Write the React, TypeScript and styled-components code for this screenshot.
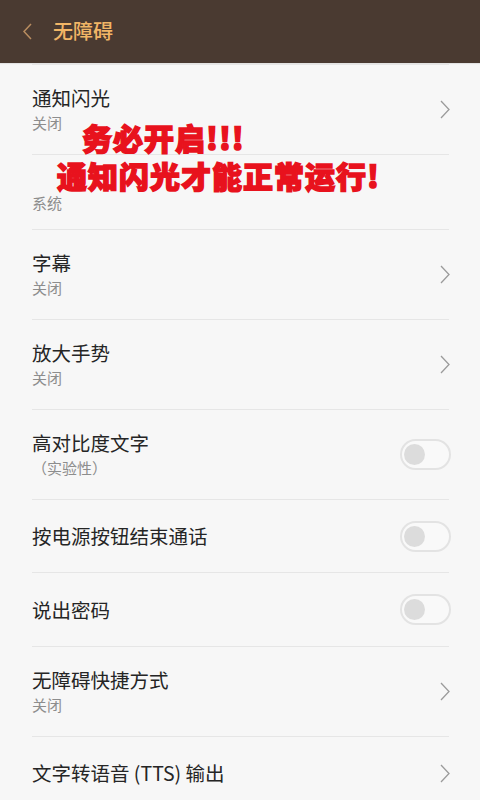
import React from "react";
import styled, { createGlobalStyle } from "styled-components";

const Global = createGlobalStyle`
  html, body { margin: 0; padding: 0; background: #f7f7f7; }
  body {
    font-family: "Noto Sans CJK SC", "Noto Sans", sans-serif;
    overflow: hidden;
  }
  * { box-sizing: border-box; }
`;

const Screen = styled.div`
  width: 480px;
  height: 800px;
  background: #f7f7f7;
  display: flex;
  flex-direction: column;
  overflow: hidden;
  position: relative;
`;

const Header = styled.header`
  height: 63px;
  flex: none;
  background: #4a3a31;
  display: flex;
  align-items: center;
  padding-left: 23px;
  gap: 21px;
  box-shadow: 0 1px 1px rgba(0, 0, 0, 0.08);
`;

const BackIcon = styled.svg`
  width: 9px;
  height: 17px;
  margin-top: -1px;
`;

const HeaderTitle = styled.h1`
  margin: 0;
  font-size: 20px;
  font-weight: 500;
  color: #f1b566;
  line-height: 1;
  margin-top: -2px;
`;

const List = styled.div`
  margin: 1px 31px 0 32px;
  border-top: 1px solid #e6e6e6;
  display: flex;
  flex-direction: column;
`;

const Row = styled.div<{ $h: number }>`
  height: ${(p) => p.$h}px;
  flex: none;
  display: flex;
  align-items: center;
  justify-content: space-between;
  border-bottom: 1px solid #e6e6e6;
`;

const TextBlock = styled.div`
  display: flex;
  flex-direction: column;
`;

const Title = styled.div<{ $blank?: boolean }>`
  font-size: 19.5px;
  line-height: 26px;
  height: ${(p) => (p.$blank ? 20 : 26)}px;
  color: #252525;
  white-space: nowrap;
`;

const Sub = styled.div`
  font-size: 15px;
  line-height: 22px;
  margin-top: 1px;
  color: #8d8d8d;
  white-space: nowrap;
`;

const Chevron = styled.svg`
  width: 10px;
  height: 19px;
  flex: none;
  margin-right: -1px;
`;

const Toggle = styled.div`
  width: 51px;
  height: 31px;
  flex: none;
  border: 2px solid #e3e3e3;
  border-radius: 16px;
  background: #f9f9f9;
  display: flex;
  align-items: center;
  padding-left: 2px;
  margin-right: -2px;
`;

const Knob = styled.div`
  width: 21px;
  height: 21px;
  border-radius: 50%;
  background: #dcdcdc;
`;

const Shout = styled.div`
  position: absolute;
  left: 57px;
  top: 118px;
  pointer-events: none;
  font-family: "Noto Sans CJK SC", sans-serif;
  font-size: 30px;
  font-weight: 900;
  line-height: 38px;
  color: #e8121d;
  -webkit-text-stroke: 1.5px #e8121d;
  letter-spacing: 1px;
  white-space: nowrap;
  text-indent: 25px;
`;

const ChevronIcon = () => (
  <Chevron viewBox="0 0 10 19" fill="none">
    <polyline points="1,1 9,9.5 1,18" stroke="#9b9b9b" strokeWidth="1.3" />
  </Chevron>
);

const Switch = () => (
  <Toggle>
    <Knob />
  </Toggle>
);

type Item = {
  title: string;
  sub?: string;
  h: number;
  kind: "chevron" | "toggle" | "none";
};

const items: Item[] = [
  { title: "通知闪光", sub: "关闭", h: 90, kind: "chevron" },
  { title: "", sub: "系统", h: 75, kind: "none" },
  { title: "字幕", sub: "关闭", h: 90, kind: "chevron" },
  { title: "放大手势", sub: "关闭", h: 90, kind: "chevron" },
  { title: "高对比度文字", sub: "（实验性）", h: 90, kind: "toggle" },
  { title: "按电源按钮结束通话", h: 73, kind: "toggle" },
  { title: "说出密码", h: 74, kind: "toggle" },
  { title: "无障碍快捷方式", sub: "关闭", h: 90, kind: "chevron" },
  { title: "文字转语音 (TTS) 输出", h: 73, kind: "chevron" },
];

export default function App() {
  return (
    <Screen>
      <Global />
      <Header>
        <BackIcon viewBox="0 0 9 17" fill="none">
          <polyline points="8,1 1,8.5 8,16" stroke="#b98d60" strokeWidth="1.5" />
        </BackIcon>
        <HeaderTitle>无障碍</HeaderTitle>
      </Header>
      <List>
        {items.map((it, i) => (
          <Row key={i} $h={it.h}>
            <TextBlock>
              <Title $blank={!it.title}>{it.title}</Title>
              {it.sub && <Sub>{it.sub}</Sub>}
            </TextBlock>
            {it.kind === "chevron" && <ChevronIcon />}
            {it.kind === "toggle" && <Switch />}
          </Row>
        ))}
      </List>
      <Shout>
        务必开启!!!
        <br />
        通知闪光才能正常运行!
      </Shout>
    </Screen>
  );
}
